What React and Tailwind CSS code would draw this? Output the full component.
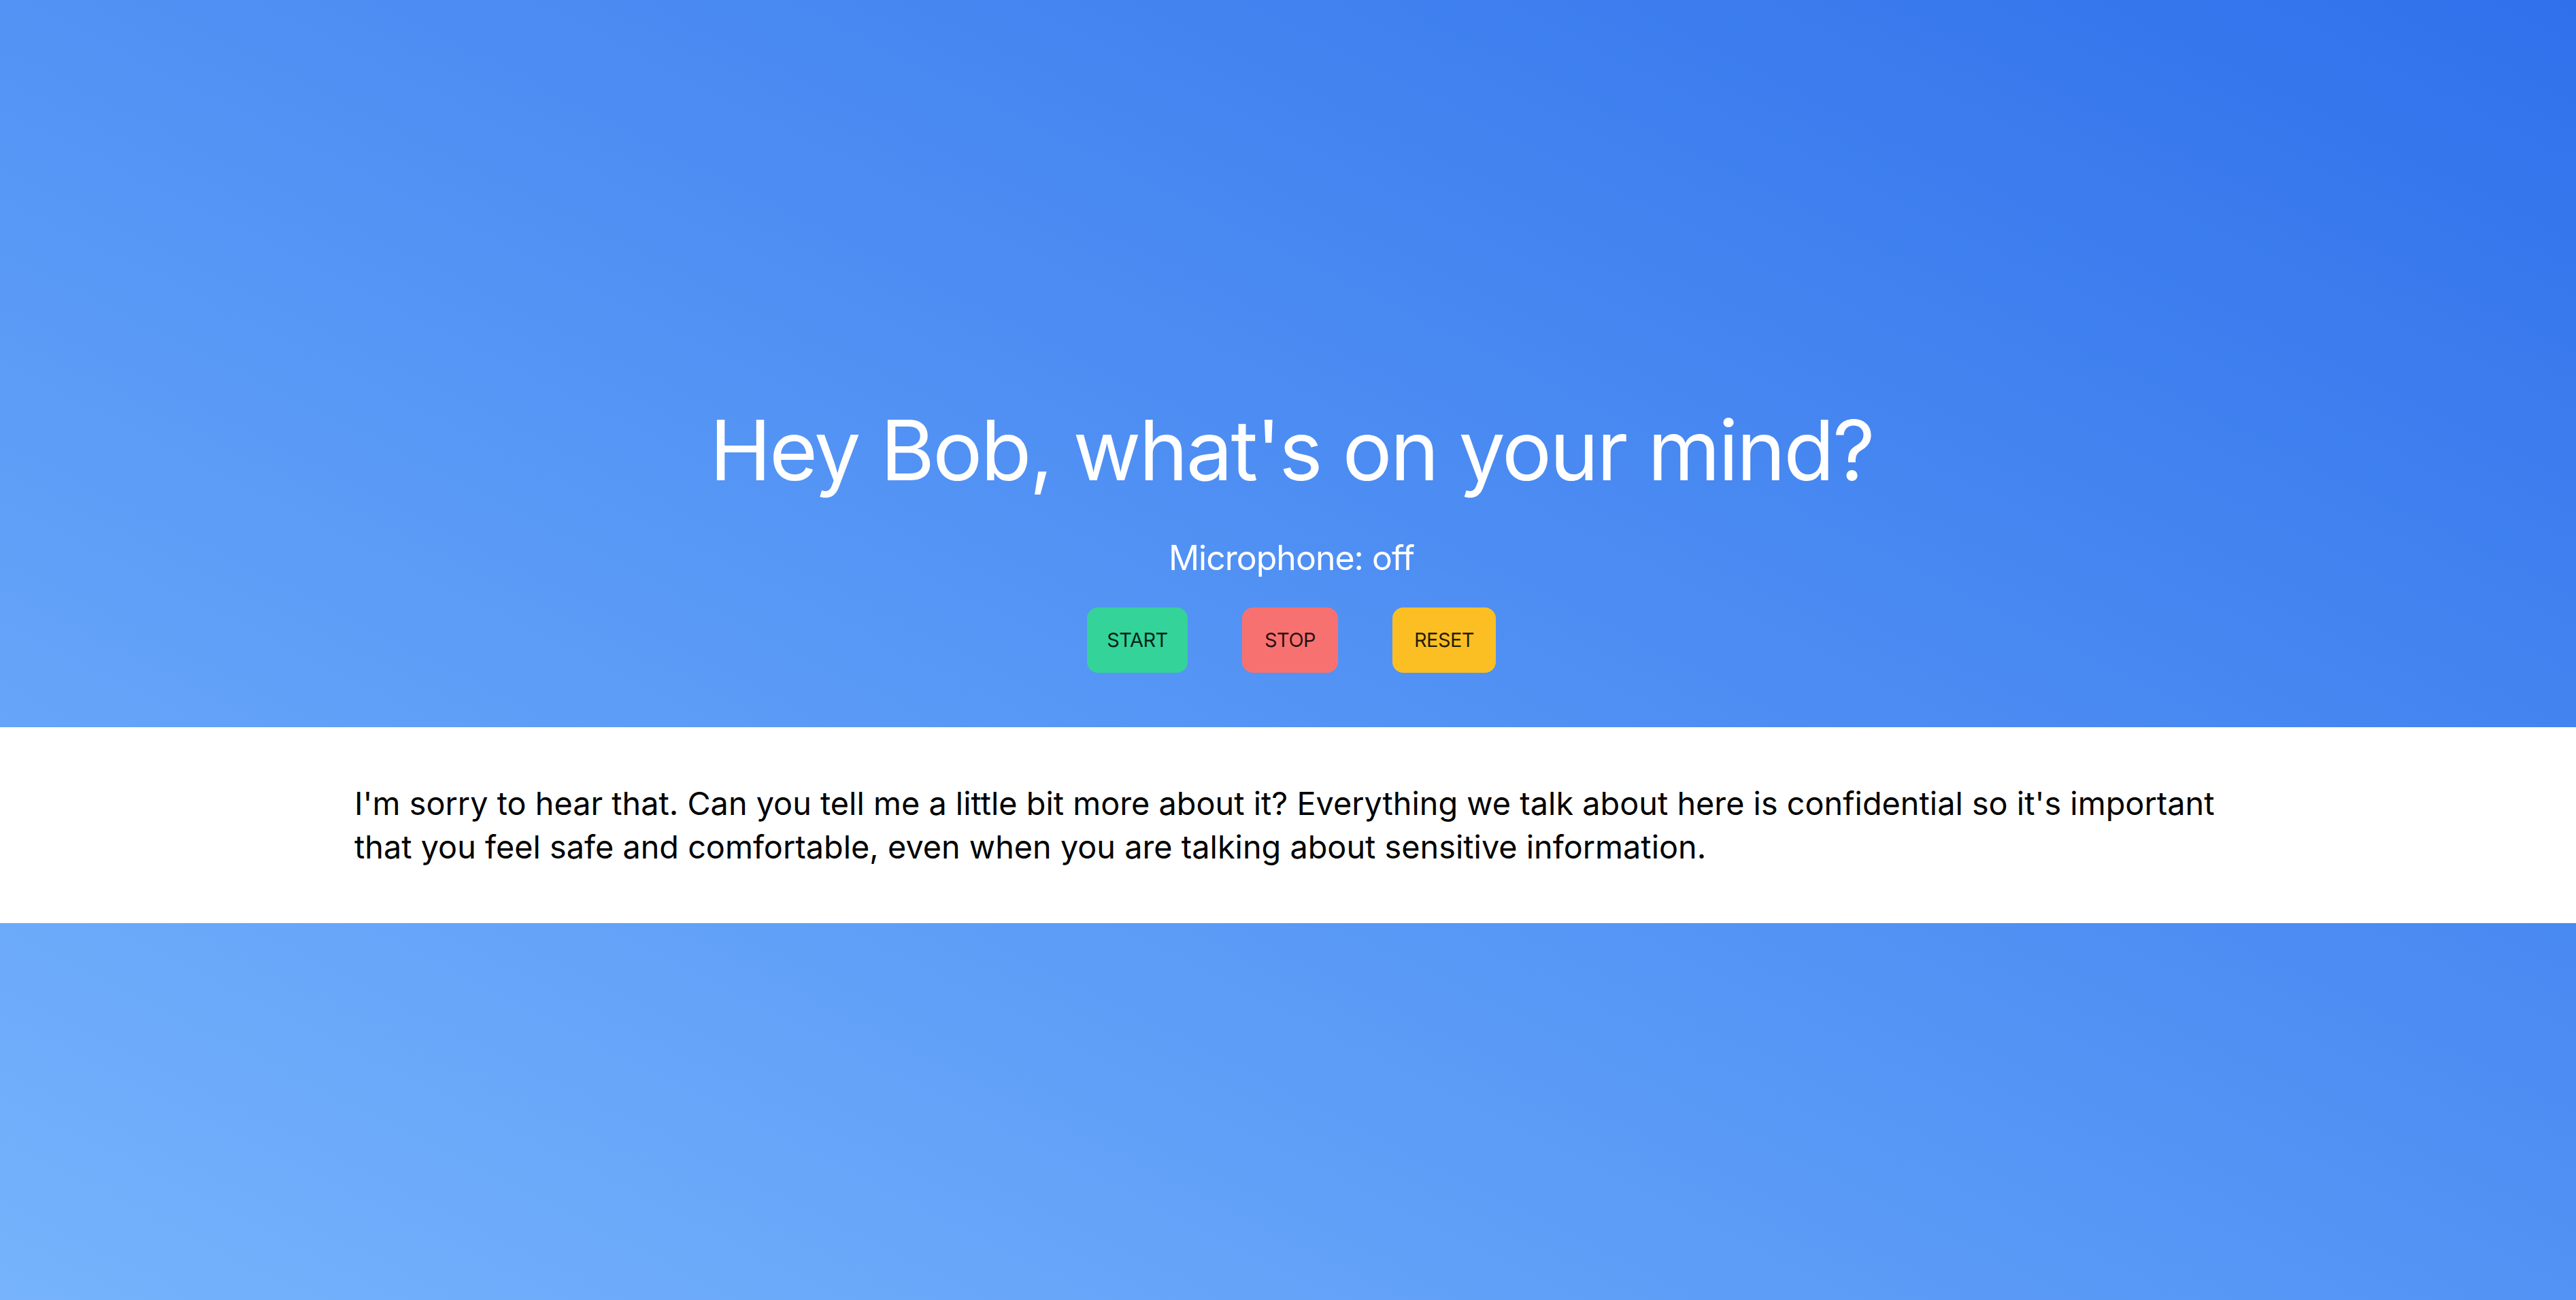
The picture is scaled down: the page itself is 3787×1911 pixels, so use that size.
import React, { useState } from 'react';

const font = { fontFamily: 'Inter, "Open Sans", sans-serif' };

const App = () => {
    const [listening, setListening] = useState(false);

    return (
        <div
            className="min-h-screen w-full flex flex-col bg-linear-to-tr from-[#76b3fc] to-[#3070eb]"
            style={font}
        >
            {/* Header */}
            <div className="h-[1069px] flex flex-col items-center justify-end pb-[80px] pl-[10px]">
                <h1 className="text-[122px] leading-none font-normal text-white tracking-[-0.023em]">
                    Hey Bob, what's on your mind?
                </h1>
                <p className="mt-[72px] text-[50px] leading-none font-normal text-white tracking-[-0.02em]">
                    Microphone: {listening ? 'on' : 'off'}
                </p>
                <div className="mt-[48px] flex gap-[80px]">
                    <button
                        onClick={() => setListening(true)}
                        className="h-[96px] w-[148px] rounded-[16px] bg-[#34d399] text-[29px] text-black/85 tracking-[-0.02em]"
                    >
                        START
                    </button>
                    <button
                        onClick={() => setListening(false)}
                        className="h-[96px] w-[141px] rounded-[16px] bg-[#f87171] text-[29px] text-black/85 tracking-[-0.02em]"
                    >
                        STOP
                    </button>
                    <button
                        onClick={() => setListening(false)}
                        className="h-[96px] w-[152px] rounded-[16px] bg-[#fbbf24] text-[29px] text-black/85 tracking-[-0.02em]"
                    >
                        RESET
                    </button>
                </div>
            </div>

            {/* Response */}
            <div className="h-[288px] bg-white flex items-center">
                <p className="w-[2745px] mx-auto text-[46.8px] leading-[64px] text-black">
                    I'm sorry to hear that. Can you tell me a little bit more about it? Everything we talk about here is confidential so it's important that you feel safe and comfortable, even when you are talking about sensitive information.
                </p>
            </div>

            <div className="flex-1" />
        </div>
    );
};

export default App;
